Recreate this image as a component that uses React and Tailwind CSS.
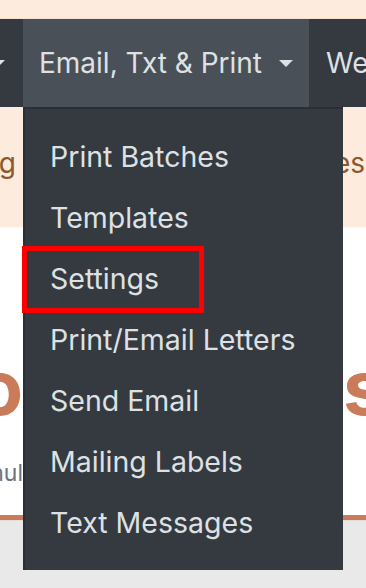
import React from 'react';

const items = [
    'Print Batches',
    'Templates',
    'Settings',
    'Print/Email Letters',
    'Send Email',
    'Mailing Labels',
    'Text Messages',
];

function Caret({ className }) {
    return (
        <svg viewBox="0 0 16 8" className={className} fill="currentColor">
            <path d="M0 0h16L8 8z" />
        </svg>
    );
}

export default function App() {
    return (
        <div
            className="relative w-[366px] h-[588px] overflow-hidden bg-white"
            style={{ fontFamily: 'Inter, "Noto Sans", sans-serif' }}
        >
            {/* Top alert strip */}
            <div className="h-[19px] bg-[#fdebdd] border-b border-[#f7dfcd]" />

            {/* Navbar */}
            <nav className="h-[88px] bg-[#343a40] flex items-stretch text-[28px] text-[#dfe1e3]">
                <div className="w-[23px] shrink-0 flex items-center">
                    <Caret className="w-[16px] h-[7px] -ml-[10px] shrink-0" />
                </div>
                <div className="w-[286px] shrink-0 bg-[#495057] flex items-center pl-[16px] gap-[16px]">
                    <span className="whitespace-nowrap">Email, Txt &amp; Print</span>
                    <Caret className="w-[16px] h-[7px] mt-[1px] shrink-0" />
                </div>
                <div className="flex items-center pl-[17px] whitespace-nowrap">Website</div>
            </nav>

            {/* Warning banner */}
            <div className="h-[120px] bg-[#fdebdd] flex items-start pt-[35px] text-[28px] text-[#8a5a2e] whitespace-nowrap">
                <div className="w-[16px] shrink-0 flex justify-end">
                    <span>Warning</span>
                </div>
                <span className="ml-[318px]">es</span>
            </div>

            {/* Page heading */}
            <div className="h-[288px] flex flex-col">
                <div className="mt-[122px] h-[76px] flex text-[76px] font-bold leading-none text-[#c97b5a] whitespace-nowrap">
                    <div className="w-[23px] shrink-0 flex justify-end">
                        <span>Do</span>
                    </div>
                    <span className="ml-[320px]">s</span>
                </div>
                <div className="mt-[37px] h-[23px] flex text-[23px] leading-[23px] text-[#6c757d] whitespace-nowrap">
                    <div className="w-[23px] shrink-0 flex justify-end">
                        <span>Annul</span>
                    </div>
                </div>
            </div>
            <div className="h-[5px] bg-[#c97b5a]" />

            {/* Footer */}
            <div className="h-[68px] bg-[#e9e9e9] border-t border-[#dedede]" />

            {/* Dropdown menu */}
            <div className="absolute left-[23px] top-[107px] w-[320px] h-[463px] bg-[#343a40] border-t-2 border-l-2 border-[#2b2f35] pt-[18px]">
                <ul className="text-[28.5px] text-[#dee1e4]">
                    {items.map((item) => (
                        <li key={item} className="h-[61px] flex items-center pl-[25px] whitespace-nowrap">
                            {item}
                        </li>
                    ))}
                </ul>
            </div>

            {/* Highlight box */}
            <div className="absolute left-[22px] top-[246px] w-[182px] h-[67px] border-[5px] border-[#ff0000]" />
        </div>
    );
}
